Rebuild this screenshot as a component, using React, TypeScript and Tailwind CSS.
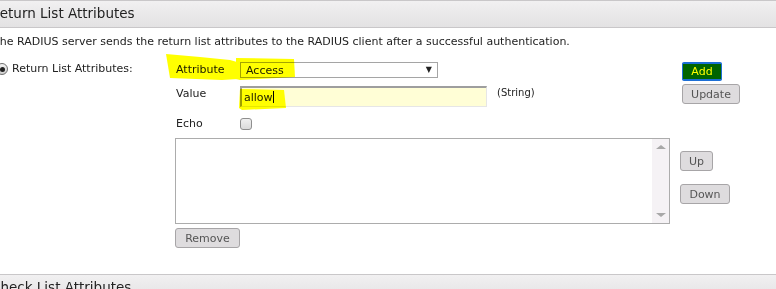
import React from "react";

function SectionHeader({ title }: { title: string }) {
  return (
    <div className="h-[28px] border-y border-[#c9c7c9] bg-gradient-to-b from-[#f1f0f1] to-[#e3e2e3] flex items-center">
      <span className="ml-[-9px] text-[13.5px] text-[#222] leading-none whitespace-nowrap">{title}</span>
    </div>
  );
}

function GrayButton({ label, w }: { label: string; w: string }) {
  return (
    <button
      className={`${w} h-[20px] rounded-[3px] border border-[#a7a5a7] bg-[#dedcde] text-[11px] text-[#555] leading-none flex items-center justify-center`}
    >
      {label}
    </button>
  );
}

export default function App() {
  return (
    <div className="relative w-[776px] h-[289px] overflow-hidden bg-white font-['DejaVu_Sans',Verdana,sans-serif] text-[#222]">
      <SectionHeader title="Return List Attributes" />

      <p className="ml-[-7px] mt-[7px] text-[11px] leading-[13px] whitespace-nowrap">
        The RADIUS server sends the return list attributes to the RADIUS client after a successful authentication.
      </p>

      {/* Row: Attribute */}
      <div className="flex items-center mt-[11px] h-[20px]">
        <div className="w-[176px] flex items-center">
          <span className="ml-[-4px] w-[12px] h-[12px] rounded-full border border-[#6f6f6f] bg-gradient-to-b from-[#f4f4f4] to-[#cfcfcf] flex items-center justify-center">
            <span className="w-[5px] h-[5px] rounded-full bg-[#222]" />
          </span>
          <span className="ml-[4px] text-[11px]">Return List Attributes:</span>
        </div>
        <span className="w-[64px] text-[11px] mt-[2px]">Attribute</span>
        <div className="w-[198px] h-[16px] mt-[2px] border border-[#a5a5a5] bg-white flex items-center justify-between pl-[5px] pr-[5px]">
          <span className="text-[11px] leading-none">Access</span>
          <span className="text-[8px] leading-none">▼</span>
        </div>
        <div className="ml-[244px] mt-[4px] w-[40px] h-[19px] border-x border-y-2 border-[#1c6ed6] rounded-[2px] bg-[#006400] text-[11px] text-[#ffff00] flex items-center justify-center leading-none">
          Add
        </div>
      </div>

      {/* Row: Value */}
      <div className="flex items-start mt-[7px] h-[22px] text-[11px] leading-[13px]">
        <div className="w-[176px]" />
        <span className="w-[64px] mt-[1px]">Value</span>
        <div className="w-[247px] h-[21px] border-t-2 border-l-2 border-b border-r border-t-[#9e9e9e] border-l-[#9e9e9e] border-b-[#e6e6e6] border-r-[#e6e6e6] bg-[#fffed6] flex items-center pl-[2px]">
          <span className="leading-none">allow</span>
          <span className="w-px h-[12px] bg-black" />
        </div>
        <div className="ml-[10px] w-[185px] text-[10px] leading-[12px] mt-[1px]">(String)</div>
        <div className="mt-[-2px]">
          <GrayButton label="Update" w="w-[58px]" />
        </div>
      </div>

      {/* Row: Echo */}
      <div className="flex items-center mt-[9px] h-[14px]">
        <div className="w-[176px]" />
        <span className="w-[64px] text-[11px]">Echo</span>
        <span className="w-[12px] h-[12px] rounded-[3px] border border-[#8e8e8e] bg-gradient-to-b from-[#f0f0f0] to-[#dadada]" />
      </div>

      {/* Row: List */}
      <div className="flex mt-[7px]">
        <div className="w-[175px]" />
        <div className="w-[495px] h-[86px] border border-[#acacac] bg-white flex justify-end">
          <div className="w-[17px] h-full bg-[#f5f2f5] flex flex-col items-center justify-between py-[6px]">
            <span className="w-0 h-0 border-x-[5px] border-x-transparent border-b-[4px] border-b-[#a8a8a8]" />
            <span className="w-0 h-0 border-x-[5px] border-x-transparent border-t-[4px] border-t-[#a8a8a8]" />
          </div>
        </div>
        <div className="ml-[10px] mt-[13px] flex flex-col gap-[13px]">
          <GrayButton label="Up" w="w-[33px]" />
          <GrayButton label="Down" w="w-[50px]" />
        </div>
      </div>

      {/* Row: Remove */}
      <div className="flex mt-[4px]">
        <div className="w-[175px]" />
        <GrayButton label="Remove" w="w-[65px]" />
      </div>

      <div className="mt-[26px]">
        <SectionHeader title="Check List Attributes" />
      </div>

      {/* Highlighter marks */}
      <svg className="absolute left-0 top-0 pointer-events-none mix-blend-multiply" width="776" height="289">
        <polygon points="166,54 200,57 230,60 237,62 238,79 222,80 170,78 168,66" fill="#ffff00" />
        <polygon points="236,58 294,59 295,77 240,80 236,79" fill="#ffff00" />
        <polygon points="240,89 284,90 286,108 242,110 239,108" fill="#ffff00" />
      </svg>
    </div>
  );
}
